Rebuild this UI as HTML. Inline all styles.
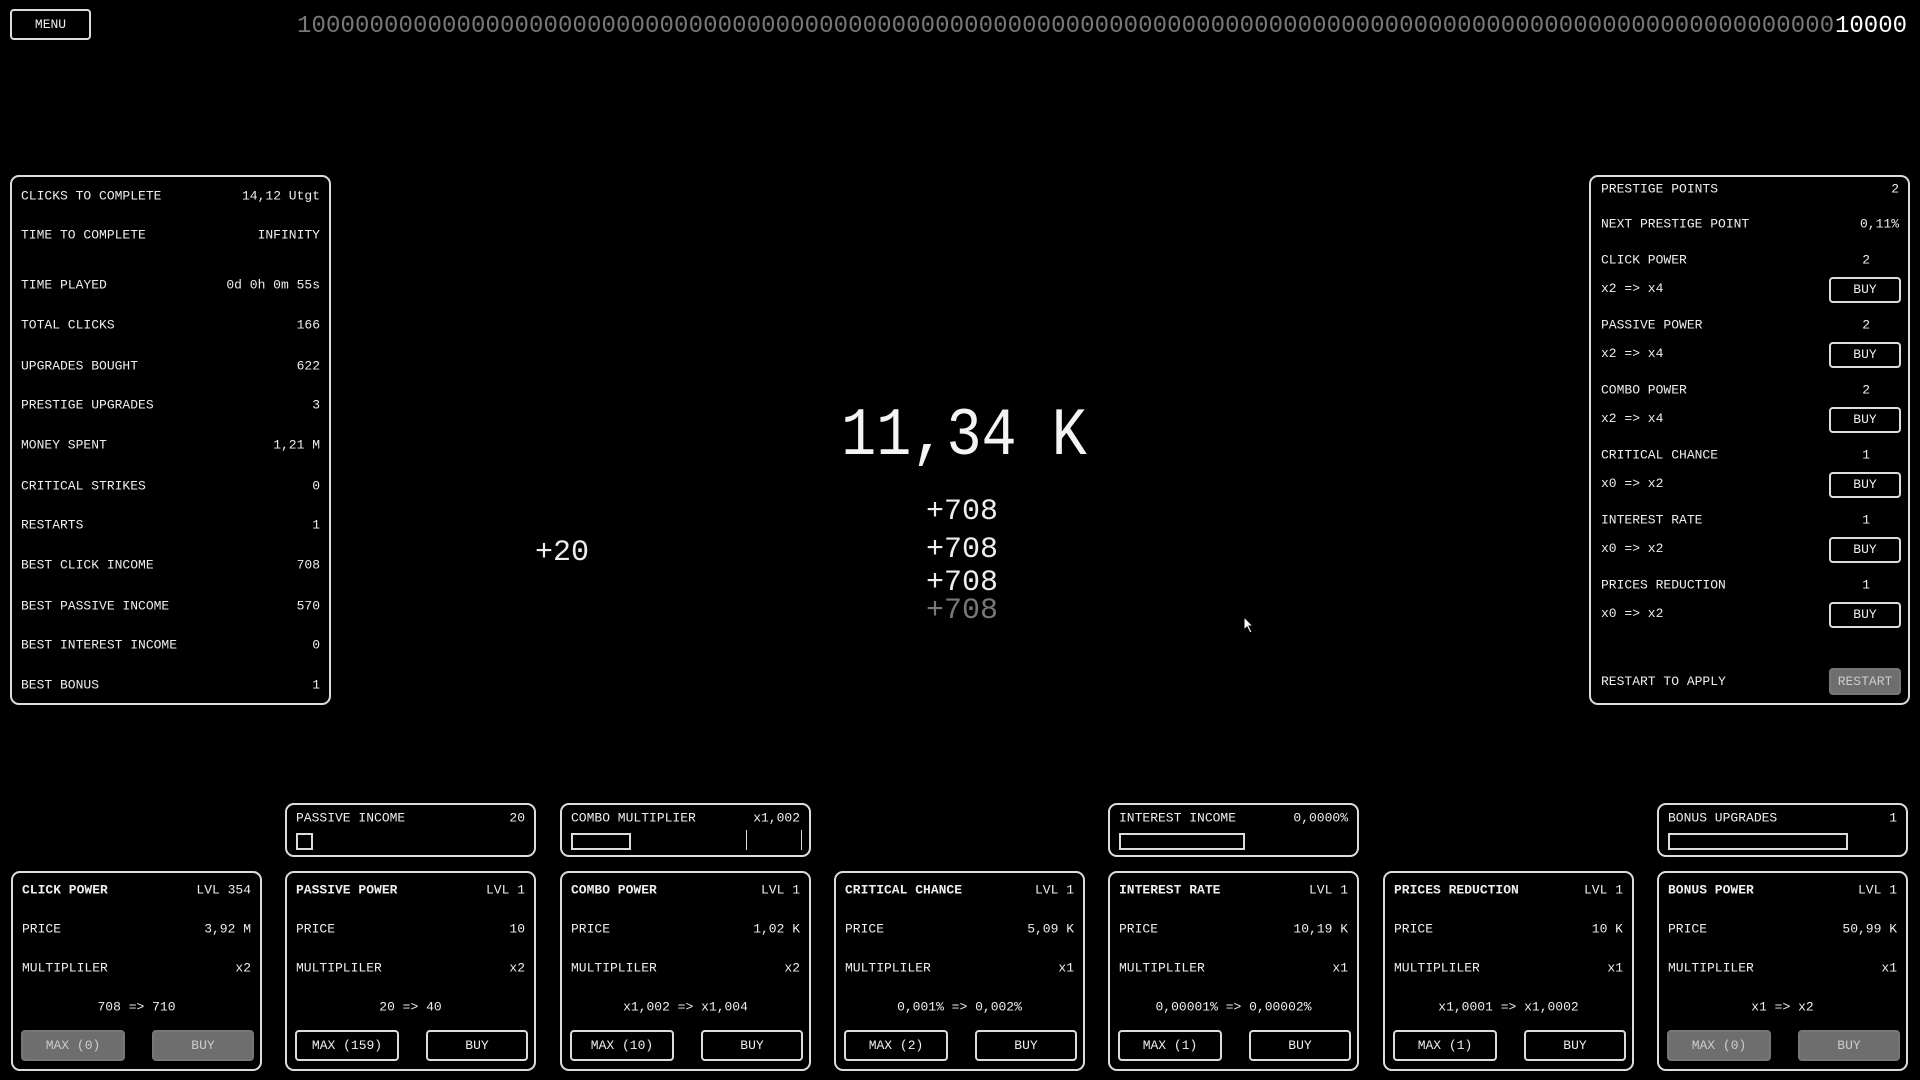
<!DOCTYPE html>
<html><head><meta charset="utf-8"><style>
*{margin:0;padding:0;box-sizing:border-box}
body{width:1920px;height:1080px;background:#000;color:#eee;font-family:"Liberation Mono","DejaVu Sans Mono",monospace;font-size:13px;overflow:hidden;position:relative}
.a{position:absolute;white-space:nowrap}
.box{position:absolute;border:2px solid #ddd;border-radius:9px}
.btn{position:absolute;border:2px solid #ddd;border-radius:4px;text-align:center;font-size:13px}
.gray{background:#6e6e6e;border-color:#777;color:#ccc}
.row{position:absolute;left:9px;right:9px;display:flex;justify-content:space-between;transform:translateY(-50%)}
b{font-weight:bold}
</style></head><body>

<div class="btn" style="left:10px;top:9px;width:81px;height:31px;line-height:27px">MENU</div>
<div class="a" style="left:297px;top:13px;font-size:24px;color:#777;letter-spacing:0.1px">1000000000000000000000000000000000000000000000000000000000000000000000000000000000000000000000000000000000</div>
<div class="a" style="left:1835px;top:13px;font-size:24px;color:#fff;background:#000;padding-right:20px">10000</div>

<!-- left stats -->
<div class="box" style="left:10px;top:175px;width:321px;height:530px">
<div class="row" style="top:19px"><span>CLICKS TO COMPLETE</span><span>14,12 Utgt</span></div>
<div class="row" style="top:58px"><span>TIME TO COMPLETE</span><span>INFINITY</span></div>
<div class="row" style="top:108px"><span>TIME PLAYED</span><span>0d 0h 0m 55s</span></div>
<div class="row" style="top:148px"><span>TOTAL CLICKS</span><span>166</span></div>
<div class="row" style="top:189px"><span>UPGRADES BOUGHT</span><span>622</span></div>
<div class="row" style="top:228px"><span>PRESTIGE UPGRADES</span><span>3</span></div>
<div class="row" style="top:268px"><span>MONEY SPENT</span><span>1,21 M</span></div>
<div class="row" style="top:309px"><span>CRITICAL STRIKES</span><span>0</span></div>
<div class="row" style="top:348px"><span>RESTARTS</span><span>1</span></div>
<div class="row" style="top:388px"><span>BEST CLICK INCOME</span><span>708</span></div>
<div class="row" style="top:429px"><span>BEST PASSIVE INCOME</span><span>570</span></div>
<div class="row" style="top:468px"><span>BEST INTEREST INCOME</span><span>0</span></div>
<div class="row" style="top:508px"><span>BEST BONUS</span><span>1</span></div>
</div>

<!-- center -->
<div class="a" style="left:964px;top:437px;font-size:68px;line-height:68px;transform:translate(-50%,-50%) scaleX(0.86);color:#f4f4f4">11,34 K</div>
<div class="a" style="left:926px;top:494px;font-size:30px;line-height:36px">+708</div>
<div class="a" style="left:926px;top:532px;font-size:30px;line-height:36px">+708</div>
<div class="a" style="left:926px;top:565px;font-size:30px;line-height:36px">+708</div>
<div class="a" style="left:926px;top:593px;font-size:30px;line-height:36px;color:#777">+708</div>
<div class="a" style="left:535px;top:535px;font-size:30px;line-height:36px">+20</div>
<svg class="a" style="left:1243px;top:616px" width="12" height="18" viewBox="0 0 12 18"><path d="M1 1 L1 14 L4 11 L7 17 L9 16 L6 10 L10 10 Z" fill="#fff" stroke="#000" stroke-width="1"/></svg>

<!-- right prestige -->
<div class="box" style="left:1589px;top:175px;width:321px;height:530px">
<div class="row" style="top:12px;left:10px"><span>PRESTIGE POINTS</span><span>2</span></div>
<div class="row" style="top:47px;left:10px"><span>NEXT PRESTIGE POINT</span><span>0,11%</span></div>
<div class="row" style="top:83px;left:10px;right:38px"><span>CLICK POWER</span><span>2</span></div>
<div class="a" style="left:10px;top:104px">x2 =&gt; x4</div>
<div class="btn" style="left:238px;top:100px;width:72px;height:26px;line-height:22px">BUY</div>
<div class="row" style="top:148px;left:10px;right:38px"><span>PASSIVE POWER</span><span>2</span></div>
<div class="a" style="left:10px;top:169px">x2 =&gt; x4</div>
<div class="btn" style="left:238px;top:165px;width:72px;height:26px;line-height:22px">BUY</div>
<div class="row" style="top:213px;left:10px;right:38px"><span>COMBO POWER</span><span>2</span></div>
<div class="a" style="left:10px;top:234px">x2 =&gt; x4</div>
<div class="btn" style="left:238px;top:230px;width:72px;height:26px;line-height:22px">BUY</div>
<div class="row" style="top:278px;left:10px;right:38px"><span>CRITICAL CHANCE</span><span>1</span></div>
<div class="a" style="left:10px;top:299px">x0 =&gt; x2</div>
<div class="btn" style="left:238px;top:295px;width:72px;height:26px;line-height:22px">BUY</div>
<div class="row" style="top:343px;left:10px;right:38px"><span>INTEREST RATE</span><span>1</span></div>
<div class="a" style="left:10px;top:364px">x0 =&gt; x2</div>
<div class="btn" style="left:238px;top:360px;width:72px;height:26px;line-height:22px">BUY</div>
<div class="row" style="top:408px;left:10px;right:38px"><span>PRICES REDUCTION</span><span>1</span></div>
<div class="a" style="left:10px;top:429px">x0 =&gt; x2</div>
<div class="btn" style="left:238px;top:425px;width:72px;height:26px;line-height:22px">BUY</div>
<div class="a" style="left:10px;top:497px">RESTART TO APPLY</div>
<div class="btn gray" style="left:238px;top:491px;width:72px;height:27px;line-height:23px">RESTART</div>
</div>

<!-- small panels -->
<div class="box" style="left:285px;top:803px;width:251px;height:54px">
<div class="row" style="top:13px"><span>PASSIVE INCOME</span><span>20</span></div>
<div class="a" style="left:9px;top:28px;width:17px;height:17px;border:2px solid #ddd"></div></div>
<div class="box" style="left:560px;top:803px;width:251px;height:54px">
<div class="row" style="top:13px"><span>COMBO MULTIPLIER</span><span>x1,002</span></div>
<div class="a" style="left:9px;top:28px;width:60px;height:17px;border:2px solid #ddd"></div>
<div class="a" style="left:184px;top:25px;width:1px;height:20px;background:#ddd"></div>
<div class="a" style="left:239px;top:25px;width:1px;height:20px;background:#ddd"></div></div>
<div class="box" style="left:1108px;top:803px;width:251px;height:54px">
<div class="row" style="top:13px"><span>INTEREST INCOME</span><span>0,0000%</span></div>
<div class="a" style="left:9px;top:28px;width:126px;height:17px;border:2px solid #ddd"></div></div>
<div class="box" style="left:1657px;top:803px;width:251px;height:54px">
<div class="row" style="top:13px"><span>BONUS UPGRADES</span><span>1</span></div>
<div class="a" style="left:9px;top:28px;width:180px;height:17px;border:2px solid #ddd"></div></div>

<!-- big panels -->
<div class="box" style="left:11px;top:871px;width:251px;height:200px">
<div class="row" style="top:17px"><b>CLICK POWER</b><span>LVL 354</span></div>
<div class="row" style="top:56px"><span>PRICE</span><span>3,92 M</span></div>
<div class="row" style="top:95px"><span>MULTIPLILER</span><span>x2</span></div>
<div class="row" style="top:134px;justify-content:center"><span>708 =&gt; 710</span></div>
<div class="btn gray" style="left:8px;top:157px;width:104px;height:31px;line-height:27px">MAX (0)</div>
<div class="btn gray" style="left:139px;top:157px;width:102px;height:31px;line-height:27px">BUY</div></div>

<div class="box" style="left:285px;top:871px;width:251px;height:200px">
<div class="row" style="top:17px"><b>PASSIVE POWER</b><span>LVL 1</span></div>
<div class="row" style="top:56px"><span>PRICE</span><span>10</span></div>
<div class="row" style="top:95px"><span>MULTIPLILER</span><span>x2</span></div>
<div class="row" style="top:134px;justify-content:center"><span>20 =&gt; 40</span></div>
<div class="btn" style="left:8px;top:157px;width:104px;height:31px;line-height:27px">MAX (159)</div>
<div class="btn" style="left:139px;top:157px;width:102px;height:31px;line-height:27px">BUY</div></div>

<div class="box" style="left:560px;top:871px;width:251px;height:200px">
<div class="row" style="top:17px"><b>COMBO POWER</b><span>LVL 1</span></div>
<div class="row" style="top:56px"><span>PRICE</span><span>1,02 K</span></div>
<div class="row" style="top:95px"><span>MULTIPLILER</span><span>x2</span></div>
<div class="row" style="top:134px;justify-content:center"><span>x1,002 =&gt; x1,004</span></div>
<div class="btn" style="left:8px;top:157px;width:104px;height:31px;line-height:27px">MAX (10)</div>
<div class="btn" style="left:139px;top:157px;width:102px;height:31px;line-height:27px">BUY</div></div>

<div class="box" style="left:834px;top:871px;width:251px;height:200px">
<div class="row" style="top:17px"><b>CRITICAL CHANCE</b><span>LVL 1</span></div>
<div class="row" style="top:56px"><span>PRICE</span><span>5,09 K</span></div>
<div class="row" style="top:95px"><span>MULTIPLILER</span><span>x1</span></div>
<div class="row" style="top:134px;justify-content:center"><span>0,001% =&gt; 0,002%</span></div>
<div class="btn" style="left:8px;top:157px;width:104px;height:31px;line-height:27px">MAX (2)</div>
<div class="btn" style="left:139px;top:157px;width:102px;height:31px;line-height:27px">BUY</div></div>

<div class="box" style="left:1108px;top:871px;width:251px;height:200px">
<div class="row" style="top:17px"><b>INTEREST RATE</b><span>LVL 1</span></div>
<div class="row" style="top:56px"><span>PRICE</span><span>10,19 K</span></div>
<div class="row" style="top:95px"><span>MULTIPLILER</span><span>x1</span></div>
<div class="row" style="top:134px;justify-content:center"><span>0,00001% =&gt; 0,00002%</span></div>
<div class="btn" style="left:8px;top:157px;width:104px;height:31px;line-height:27px">MAX (1)</div>
<div class="btn" style="left:139px;top:157px;width:102px;height:31px;line-height:27px">BUY</div></div>

<div class="box" style="left:1383px;top:871px;width:251px;height:200px">
<div class="row" style="top:17px"><b>PRICES REDUCTION</b><span>LVL 1</span></div>
<div class="row" style="top:56px"><span>PRICE</span><span>10 K</span></div>
<div class="row" style="top:95px"><span>MULTIPLILER</span><span>x1</span></div>
<div class="row" style="top:134px;justify-content:center"><span>x1,0001 =&gt; x1,0002</span></div>
<div class="btn" style="left:8px;top:157px;width:104px;height:31px;line-height:27px">MAX (1)</div>
<div class="btn" style="left:139px;top:157px;width:102px;height:31px;line-height:27px">BUY</div></div>

<div class="box" style="left:1657px;top:871px;width:251px;height:200px">
<div class="row" style="top:17px"><b>BONUS POWER</b><span>LVL 1</span></div>
<div class="row" style="top:56px"><span>PRICE</span><span>50,99 K</span></div>
<div class="row" style="top:95px"><span>MULTIPLILER</span><span>x1</span></div>
<div class="row" style="top:134px;justify-content:center"><span>x1 =&gt; x2</span></div>
<div class="btn gray" style="left:8px;top:157px;width:104px;height:31px;line-height:27px">MAX (0)</div>
<div class="btn gray" style="left:139px;top:157px;width:102px;height:31px;line-height:27px">BUY</div></div>

</body></html>
